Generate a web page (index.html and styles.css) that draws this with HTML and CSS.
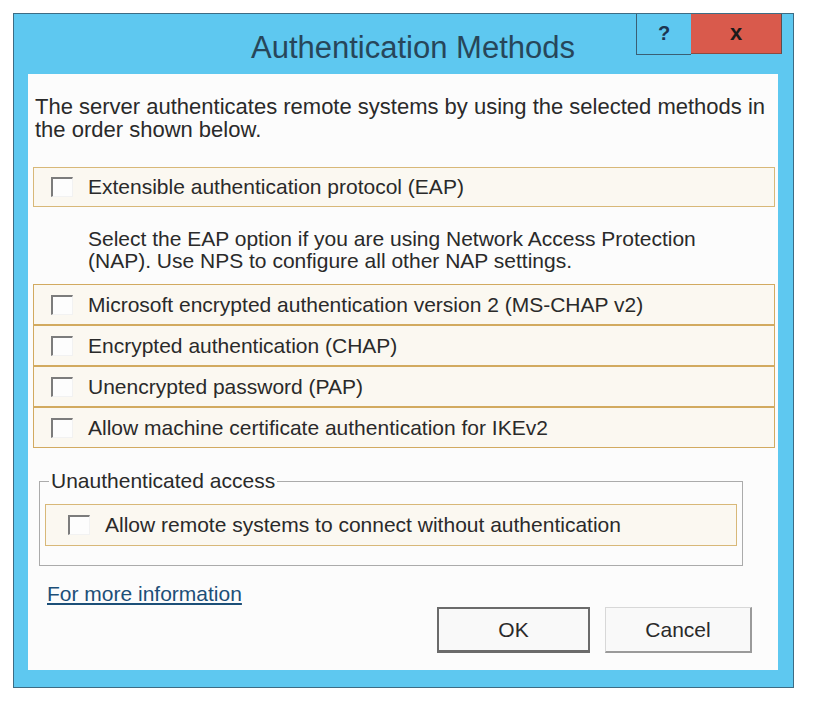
FILE: index.html
```html
<!DOCTYPE html>
<html lang="en">

<head>
  <meta charset="UTF-8">
  <meta name="viewport" content="width=device-width, initial-scale=1.0">
  <title>Authentication Methods</title>
  <link rel="stylesheet" href="styles.css">
</head>

<body>
  <div class="page">
    <div class="window">
      <!-- title bar -->
      <div class="titlebar">
        <div class="title">Authentication Methods</div>
        <div class="controls">
          <div class="btn-help">?</div>
          <div class="btn-close">x</div>
        </div>
      </div>

      <!-- dialog body -->
      <div class="content">
        <p class="intro">The server authenticates remote systems by using the selected methods in the order shown below.</p>

        <label class="row row-eap"><span class="check"></span>Extensible authentication protocol (EAP)</label>

        <p class="note">Select the EAP option if you are using Network Access Protection (NAP). Use NPS to configure all other NAP settings.</p>

        <div class="rows">
          <label class="row"><span class="check"></span>Microsoft encrypted authentication version 2 (MS-CHAP v2)</label>
          <label class="row"><span class="check"></span>Encrypted authentication (CHAP)</label>
          <label class="row"><span class="check"></span>Unencrypted password (PAP)</label>
          <label class="row"><span class="check"></span>Allow machine certificate authentication for IKEv2</label>
        </div>

        <fieldset class="group">
          <legend>Unauthenticated access</legend>
          <label class="row row-inner"><span class="check"></span>Allow remote systems to connect without authentication</label>
        </fieldset>

        <div class="footer">
          <a class="more-link" href="#">For more information</a>
          <div class="buttons">
            <button class="btn btn-ok">OK</button>
            <button class="btn btn-cancel">Cancel</button>
          </div>
        </div>
      </div>
    </div>
  </div>
</body>

</html>
```

FILE: styles.css
```css
* {
  margin: 0;
  padding: 0;
  box-sizing: border-box;
}

body {
  font-family: 'Liberation Sans', Arial, sans-serif;
  background-color: #fff;
  color: #2a2a2a;
}

.page {
  padding: 13px 0 0 13px;
}

/* window frame */
.window {
  width: 781px;
  height: 675px;
  border: 1px solid #3d6c84;
  background-color: #5ec8f0;
  padding: 0 15px 17px 14px;
  display: flex;
  flex-direction: column;
}

.titlebar {
  height: 60px;
  display: flex;
  margin-right: -4px;
}

.title {
  flex: 1;
  padding-left: 162px;
  padding-top: 16px;
  text-align: center;
  font-size: 31px;
  color: #27465a;
}

.controls {
  display: flex;
  align-items: flex-start;
}

.btn-help {
  width: 55px;
  height: 41px;
  border-left: 1px solid #3a5f74;
  border-bottom: 1px solid #3a5f74;
  text-align: center;
  font-size: 20px;
  font-weight: bold;
  line-height: 38px;
  color: #1d3550;
}

.btn-close {
  width: 91px;
  height: 40px;
  background-color: #d95a4c;
  border-bottom: 1px solid #8d4a40;
  border-right: 1px solid #5a4e50;
  text-align: center;
  font-size: 22px;
  font-weight: bold;
  line-height: 38px;
  color: #1b1b1b;
}

/* white dialog area */
.content {
  flex: 1;
  background-color: #fcfcfc;
  padding: 21px 26px 0 7px;
}

.intro {
  font-size: 22px;
  line-height: 23px;
  margin-right: -24px;
}

.row {
  display: flex;
  align-items: center;
  height: 41px;
  border: 1px solid #d8b878;
  background-color: #fbf8f1;
  font-size: 21px;
  padding-left: 17px;
  margin-right: -23px;
}

.row-eap {
  margin-top: 26px;
  margin-left: -2px;
  height: 40px;
}

.check {
  width: 22px;
  height: 20px;
  margin-right: 15px;
  background-color: #fdfdfd;
  border-top: 2px solid #7c7c7c;
  border-left: 2px solid #7c7c7c;
  border-right: 1px solid #f2f2f2;
  border-bottom: 1px solid #f2f2f2;
}

.note {
  margin: 21px 0 0 53px;
  font-size: 21px;
  line-height: 22px;
}

.rows {
  margin: 12px 0 0 -2px;
}

.rows .row {
  border-color: #d2aa60;
}

/* unauthenticated access group */
.group {
  margin: 22px 9px 0 4px;
  border: 1px solid #ababab;
  padding: 0 5px 19px 5px;
}

.group legend {
  margin-left: 4px;
  padding: 0 2px;
  font-size: 21px;
  line-height: 22px;
}

.row-inner {
  margin: 12px 0 0 0;
  padding-left: 22px;
  height: 42px;
}

/* footer */
.footer {
  margin-top: 17px;
  padding-left: 12px;
}

.more-link {
  font-size: 21px;
  line-height: 22px;
  color: #1c4f78;
  text-decoration: underline;
}

.buttons {
  display: flex;
  justify-content: flex-end;
  gap: 15px;
  margin-top: 2px;
}

.btn {
  height: 46px;
  font-family: 'Liberation Sans', Arial, sans-serif;
  font-size: 21px;
  color: #2a2a2a;
  background-color: #f9f9f9;
  cursor: pointer;
}

.btn-ok {
  width: 153px;
  border: 2px solid #6b6b6b;
  border-bottom-width: 3px;
}

.btn-cancel {
  width: 147px;
  border: 1px solid #d8d8d8;
  border-right: 2px solid #9a9a9a;
  border-bottom: 2px solid #9a9a9a;
}
```
